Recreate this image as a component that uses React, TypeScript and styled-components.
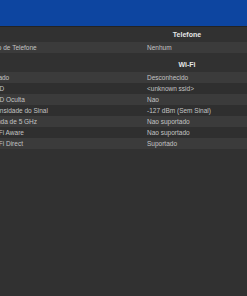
import React from 'react';
import styled, { createGlobalStyle } from 'styled-components';

interface Row {
  label: string;
  value: string;
}

interface Section {
  title: string;
  rows: Row[];
}

const sections: Section[] = [
  {
    title: 'Telefone',
    rows: [{ label: 'Tipo de Telefone', value: 'Nenhum' }],
  },
  {
    title: 'Wi-Fi',
    rows: [
      { label: 'Estado', value: 'Desconhecido' },
      { label: 'SSID', value: '<unknown ssid>' },
      { label: 'SSID Oculta', value: 'Nao' },
      { label: 'Intensidade do Sinal', value: '-127 dBm (Sem Sinal)' },
      { label: 'Banda de 5 GHz', value: 'Nao suportado' },
      { label: 'Wi-Fi Aware', value: 'Nao suportado' },
      { label: 'Wi-Fi Direct', value: 'Suportado' },
    ],
  },
];

const GlobalStyle = createGlobalStyle`
  html, body {
    margin: 0;
    padding: 0;
    background: #313131;
    overflow: hidden;
  }
  body {
    font-family: "Liberation Sans", Arial, sans-serif;
  }
`;

const Page = styled.div`
  width: 247px;
  height: 296px;
  background: #313131;
  overflow: hidden;
`;

const AppBar = styled.div`
  height: 26px;
  background: #0d45a0;
  border-bottom: 1px solid #232323;
`;

// the table is wider than the window, its label column starts off-screen
const Table = styled.div`
  margin-left: -11px;
  width: 258px;
`;

const SectionBox = styled.div<{ $first?: boolean }>`
  margin-top: ${(p) => (p.$first ? '0' : '4px')};
`;

const SectionTitle = styled.div`
  display: grid;
  grid-template-columns: 158px 1fr;
  height: 15px;
  align-items: center;

  span {
    grid-column: 2;
    width: 80px;
    text-align: center;
    font-size: 7px;
    font-weight: bold;
    color: #e6e6e6;
  }
`;

const RowLine = styled.div<{ $striped: boolean }>`
  display: grid;
  grid-template-columns: 158px 1fr;
  height: 11px;
  align-items: center;
  background: ${(p) => (p.$striped ? '#3b3b3b' : '#2f2f2f')};
  font-size: 6.5px;
  color: #c4c4c4;
  white-space: nowrap;
`;

const App: React.FC = () => {
  return (
    <Page>
      <GlobalStyle />
      <AppBar />
      <Table>
        {sections.map((section, i) => (
          <SectionBox key={section.title} $first={i === 0}>
            <SectionTitle>
              <span>{section.title}</span>
            </SectionTitle>
            {section.rows.map((row, j) => (
              <RowLine key={row.label} $striped={j % 2 === 0}>
                <span>{row.label}</span>
                <span>{row.value}</span>
              </RowLine>
            ))}
          </SectionBox>
        ))}
      </Table>
    </Page>
  );
};

export default App;
